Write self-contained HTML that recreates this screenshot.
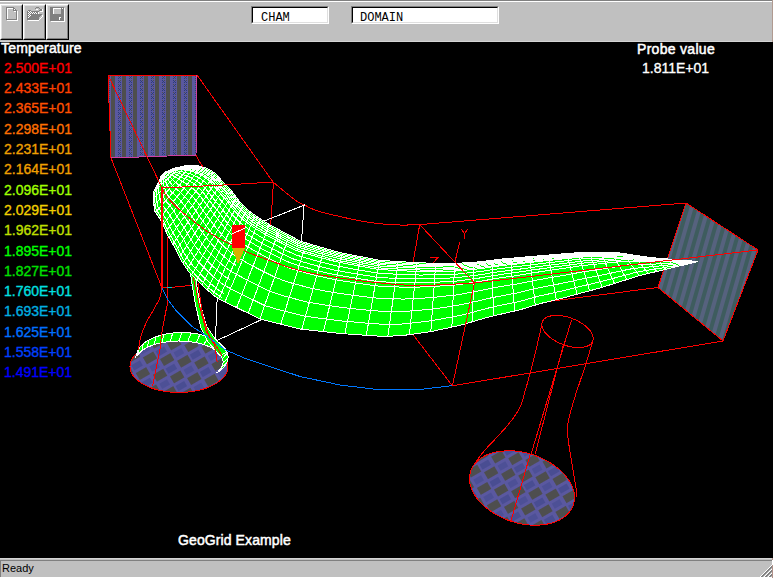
<!DOCTYPE html>
<html><head><meta charset="utf-8">
<style>
*{margin:0;padding:0;box-sizing:border-box}
html,body{width:773px;height:578px;overflow:hidden;background:#c0c0c0;position:relative;font-family:"Liberation Sans",sans-serif}
.abs{position:absolute}
#tb0{left:0;top:0;width:773px;height:1px;background:#808080}
#tb1{left:0;top:1px;width:773px;height:1px;background:#fff}
.btn{position:absolute;top:4px;width:23px;height:36px;background:#c0c0c0;border-top:1px solid #fff;border-left:1px solid #fff;border-right:1px solid #000;border-bottom:1px solid #000}
.btn i{position:absolute;left:0;top:0;right:0;bottom:0;border-top:1px solid #dfdfdf;border-left:1px solid #dfdfdf;border-right:1px solid #808080;border-bottom:1px solid #808080}
.edit{position:absolute;top:6px;height:18px;background:#fff;border-top:1px solid #808080;border-left:1px solid #808080;border-right:1px solid #fff;border-bottom:1px solid #fff}
.edit i{position:absolute;left:0;top:0;right:0;bottom:0;border-top:1px solid #000;border-left:1px solid #000;border-right:1px solid #dfdfdf;border-bottom:1px solid #dfdfdf}
.edit span{position:absolute;top:5px;font-family:"Liberation Mono",monospace;font-size:12px;line-height:12px;color:#000}
#canvas{left:0;top:42px;width:773px;height:516px;background:#000}
#status{left:0;top:558px;width:773px;height:20px;background:#c0c0c0}
.lg{position:absolute;left:4px;font-size:14px;line-height:14px;white-space:nowrap;-webkit-text-stroke:0.35px currentColor}
.wt{position:absolute;color:#fff;font-size:14px;line-height:14px;white-space:nowrap;-webkit-text-stroke:0.5px #fff;letter-spacing:0.3px}
svg{position:absolute;left:0;top:0}
#scene{position:absolute;left:0;top:0;width:773px;height:578px}
</style></head><body>
<div id="tb0" class="abs"></div>
<div id="tb1" class="abs"></div>
<div class="abs" style="left:0;top:41px;width:772px;height:1px;background:#d4d4d4"></div>
<div class="btn" style="left:0"><i></i></div>
<div class="btn" style="left:23px"><i></i></div>
<div class="btn" style="left:46px"><i></i></div>
<svg width="773" height="42" viewBox="0 0 773 42" shape-rendering="crispEdges" style="position:absolute;left:0;top:0">
<g fill="#808080">
<rect x="6" y="7" width="8" height="1"/><rect x="6" y="7" width="1" height="13"/><rect x="6" y="19" width="11" height="1"/><rect x="16" y="10" width="1" height="10"/>
<rect x="13" y="8" width="1" height="3"/><rect x="14" y="8" width="1" height="1"/><rect x="15" y="9" width="1" height="1"/><rect x="13" y="10" width="3" height="1"/>
</g>
<g fill="#fff">
<rect x="7" y="8" width="6" height="1"/><rect x="7" y="8" width="1" height="11"/><rect x="17" y="11" width="1" height="10"/><rect x="7" y="20" width="11" height="1"/>
<rect x="14" y="9" width="1" height="1"/><rect x="14" y="11" width="2" height="1"/>
</g>
<g fill="#808080">
<rect x="28" y="10" width="3" height="1"/><rect x="27" y="11" width="12" height="9"/><rect x="30" y="14" width="12" height="1"/>
<rect x="31" y="15" width="10" height="1"/><rect x="31" y="16" width="9" height="1"/><rect x="31" y="17" width="8" height="1"/><rect x="31" y="18" width="7" height="1"/>
<rect x="35" y="8" width="1" height="1"/><rect x="36" y="7" width="3" height="1"/><rect x="39" y="8" width="1" height="1"/><rect x="40" y="9" width="2" height="2"/><rect x="39" y="10" width="1" height="1"/>
</g>
<g fill="#fff">
<rect x="28" y="11" width="1" height="1"/><rect x="30" y="11" width="1" height="1"/><rect x="29" y="12" width="1" height="1"/><rect x="31" y="12" width="1" height="1"/><rect x="33" y="12" width="1" height="1"/><rect x="35" y="12" width="1" height="1"/>
<rect x="28" y="13" width="1" height="1"/><rect x="30" y="13" width="1" height="1"/><rect x="32" y="13" width="1" height="1"/><rect x="34" y="13" width="1" height="1"/><rect x="36" y="13" width="1" height="1"/>
<rect x="29" y="14" width="1" height="1"/><rect x="28" y="15" width="1" height="1"/><rect x="30" y="15" width="1" height="1"/><rect x="29" y="16" width="1" height="1"/><rect x="28" y="17" width="1" height="1"/>
<rect x="28" y="20" width="11" height="1"/><rect x="39" y="19" width="1" height="1"/><rect x="40" y="18" width="1" height="1"/><rect x="41" y="17" width="1" height="1"/><rect x="42" y="16" width="1" height="1"/><rect x="42" y="15" width="1" height="1"/>
<rect x="36" y="9" width="2" height="1"/><rect x="42" y="9" width="1" height="3"/><rect x="40" y="11" width="2" height="1"/><rect x="38" y="12" width="1" height="2"/>
</g>
<rect x="50" y="7" width="14" height="14" fill="#808080"/>
<g fill="#fff">
<rect x="53" y="8" width="8" height="1"/><rect x="53" y="8" width="1" height="6"/><rect x="62" y="8" width="1" height="1"/>
<rect x="59" y="17" width="2" height="1"/><rect x="59" y="17" width="1" height="3"/>
<rect x="64" y="8" width="1" height="14"/><rect x="51" y="21" width="14" height="1"/>
</g>
<rect x="54" y="9" width="7" height="5" fill="#c0c0c0"/>
</svg>
<div class="edit" style="left:251px;width:78px"><i></i><span style="left:9px">CHAM</span></div>
<div class="edit" style="left:351px;width:148px"><i></i><span style="left:8px">DOMAIN</span></div>
<div id="canvas" class="abs"></div>
<div id="status" class="abs"></div>

<svg width="773" height="578" viewBox="0 0 773 578" shape-rendering="crispEdges"><defs>
<pattern id="pin" patternUnits="userSpaceOnUse" width="11" height="8" x="1" y="0">
<rect width="11" height="8" fill="#5a58a0"/>
<rect x="0" width="4" height="8" fill="#4e4e4e"/>
<rect x="7" y="0" width="1" height="1" fill="#2c3c78"/><rect x="9" y="0" width="1" height="1" fill="#4e4e4e"/>
<rect x="8" y="1" width="1" height="1" fill="#2c3c78"/>
<rect x="7" y="2" width="1" height="1" fill="#2c3c78"/><rect x="9" y="2" width="1" height="1" fill="#2c3c78"/>
<rect x="7" y="4" width="1" height="1" fill="#4e4e4e"/><rect x="9" y="4" width="1" height="1" fill="#2c3c78"/>
<rect x="8" y="5" width="1" height="1" fill="#2c3c78"/>
<rect x="7" y="6" width="1" height="1" fill="#2c3c78"/><rect x="9" y="6" width="1" height="1" fill="#4e4e4e"/>
</pattern>
<pattern id="pout" patternUnits="userSpaceOnUse" width="8" height="8" patternTransform="rotate(16)">
<rect width="8" height="8" fill="#3e5c5e"/>
<rect x="0" width="4" height="8" fill="#56627e"/>
</pattern>
<pattern id="pell" patternUnits="userSpaceOnUse" width="28" height="20" patternTransform="rotate(-30)">
<rect width="28" height="20" fill="#5a58a0"/>
<rect x="1" y="1" width="12" height="8" fill="#4e4e4e"/>
<rect x="15" y="11" width="12" height="8" fill="#4e4e4e"/>
<rect x="15" y="2" width="10" height="6" fill="#3a4486" opacity="0.55"/>
<rect x="2" y="12" width="9" height="6" fill="#3a4486" opacity="0.4"/>
</pattern>
</defs>
<polygon points="108,75 197,75 196,155 111,158" fill="url(#pin)"/>
<polyline points="111,158 108,75 197,75" fill="none" stroke="#ff0000"/>
<polyline points="197,75 196,155 111,158" fill="none" stroke="#d040a0"/>
<polygon points="686,203 758,250 723,341 658,287.5" fill="url(#pout)" stroke="#ff0000"/>
<polyline points="197.0,75.0 273.0,182.0 275.5,184.1 279.2,187.1 283.4,190.7 287.8,194.3 291.8,197.5 295.0,200.0 297.3,201.6 298.9,202.6 300.3,203.2 301.5,203.7 302.8,204.3 304.5,205.0 306.3,205.9 308.0,206.9 309.8,207.8 311.9,208.8 314.6,209.9 318.0,211.0 322.4,212.3 327.8,213.6 333.7,215.1 339.8,216.5 345.6,217.8 351.0,219.0 355.9,220.0 360.5,220.9 365.0,221.7 369.3,222.4 373.5,223.0 377.6,223.5 381.6,223.9 385.5,224.3 389.2,224.6 392.9,224.8 396.5,224.9 400.0,225.0 403.7,225.0 407.5,225.0 411.2,224.9 414.7,224.8 417.6,224.7 419.7,224.6 686.0,203.0" fill="none" stroke="#ff0000"/>
<polyline points="108.0,75.0 162.0,188.0" fill="none" stroke="#ff0000"/>
<polyline points="196.0,155.0 199.0,161.0 203.0,167.0" fill="none" stroke="#ff0000"/>
<polyline points="111.0,158.0 162.0,288.0" fill="none" stroke="#ff0000"/>
<polyline points="273.5,182.0 270.5,228.0" fill="none" stroke="#ff0000"/>
<polyline points="419.7,224.6 413.0,263.0" fill="none" stroke="#ff0000"/>
<polyline points="419.7,224.6 474.5,283.0" fill="none" stroke="#ff0000"/>
<polyline points="452.4,385.8 412.8,334.3" fill="none" stroke="#ff0000"/>
<polyline points="544.0,302.0 658.0,287.5" fill="none" stroke="#ff0000"/>
<polyline points="452.4,385.8 723.0,341.0" fill="none" stroke="#ff0000"/>
<polyline points="459.7,242.4 454.8,262.4" fill="none" stroke="#ff0000"/>
<polyline points="162.0,288.0 161.8,289.0 161.6,290.5 161.3,292.1 160.9,294.0 160.4,295.9 159.8,297.7 159.1,299.5 158.2,301.3 157.2,303.1 156.2,305.0 155.1,307.0 154.0,309.0 152.8,311.1 151.6,313.2 150.3,315.3 149.0,317.5 147.7,319.8 146.6,322.0 145.5,324.3 144.5,326.6 143.5,328.9 142.6,331.3 141.7,333.7 141.0,336.0 140.4,338.5 139.8,341.2 139.3,343.9 138.9,346.4 138.6,348.5 138.3,350.0" fill="none" stroke="#ff0000"/>
<polyline points="167.5,236.5 167.5,243.7 167.5,254.1 167.6,266.1 167.6,278.4 167.5,289.4 167.4,297.7 167.2,302.8 167.0,306.0 166.7,307.8 166.4,309.1 166.0,310.6 165.5,313.0 164.9,316.4 164.2,320.1 163.5,324.0 162.7,327.9 162.1,331.7 161.5,335.0 161.1,337.7 161.0,339.7 160.9,341.6 160.7,343.7 160.4,346.4 159.8,350.0 158.8,355.2 157.5,361.8 156.0,368.9 154.6,375.9 153.4,381.8 152.5,386.0" fill="none" stroke="#ff0000"/>
<polyline points="162.0,288.0 171.5,287.3 185.4,286.0 199.3,283.9" fill="none" stroke="#ff0000"/>
<g stroke="#00c8c8"><line x1="167" y1="287.5" x2="172" y2="287.5"/><line x1="190" y1="285.5" x2="193" y2="285.5"/></g>
<polyline points="263.6,221.3 304.1,205.2 301.5,241.0" fill="none" stroke="#ffffff"/>
<polyline points="217.2,298.0 215.4,341.3 265.0,318.0" fill="none" stroke="#ffffff"/>
<polyline points="592.7,341.2 592.2,342.3 591.5,343.3 590.6,344.2 589.5,345.0 588.3,345.7 586.9,346.3 585.3,346.8 583.6,347.2 581.8,347.5 579.9,347.6 577.9,347.6 575.8,347.5 573.7,347.3 571.5,346.9 569.2,346.4 567.0,345.9 564.8,345.2 562.6,344.4 560.4,343.5 558.3,342.5 556.2,341.4 554.2,340.3 552.4,339.1 550.6,337.8 549.0,336.5 547.5,335.1 546.2,333.8 545.0,332.4 544.0,331.0 543.2,329.6 542.6,328.2 542.1,326.8 541.9,325.5 541.8,324.2 542.0,323.0 542.3,321.8 542.8,320.7 543.5,319.7 544.4,318.8 545.5,318.0 546.7,317.3 548.1,316.7 549.7,316.2 551.4,315.8 553.2,315.5 555.1,315.4 557.1,315.4 559.2,315.5 561.3,315.7 563.5,316.1 565.8,316.6 568.0,317.1 570.2,317.8 572.4,318.6 574.6,319.5 576.7,320.5 578.8,321.6 580.8,322.7 582.6,323.9 584.4,325.2 586.0,326.5 587.5,327.9 588.8,329.2 590.0,330.6 591.0,332.0 591.8,333.4 592.4,334.8 592.9,336.2 593.1,337.5 593.2,338.8 593.0,340.0" fill="none" stroke="#ff0000"/>
<polyline points="541.6,325.6 540.8,329.3 539.6,334.4 538.2,340.5 536.7,347.0 535.2,353.3 533.8,359.0 532.5,364.2 531.1,369.4 529.8,374.4 528.5,379.2 527.2,383.8 526.0,388.0 524.9,391.8 524.0,395.3 523.1,398.4 522.2,401.4 521.2,404.2 520.0,407.0 518.7,409.6 517.3,412.1 515.8,414.4 514.3,416.6 512.7,418.8 511.0,421.0 509.3,423.2 507.7,425.3 505.9,427.3 504.1,429.4 502.1,431.6 500.0,434.0 497.6,436.6 494.8,439.5 491.9,442.5 489.1,445.5 486.5,448.3 484.2,450.9 482.3,453.2 480.6,455.3 479.2,457.2 477.9,459.1 476.8,461.0 475.7,463.0 474.8,465.3 474.0,467.7 473.3,470.3 472.8,472.6 472.3,474.6 472.0,476.0" fill="none" stroke="#ff0000"/>
<polyline points="593.5,338.6 592.7,341.4 591.6,345.1 590.2,349.6 588.8,354.5 587.2,359.6 585.7,364.5 584.1,369.5 582.3,374.8 580.4,380.3 578.6,385.7 576.8,390.9 575.3,395.7 573.9,400.2 572.7,404.4 571.5,408.5 570.4,412.3 569.5,415.8 568.8,419.0 568.2,421.7 567.8,423.8 567.6,425.6 567.4,427.4 567.4,429.5 567.5,432.0 567.7,434.9 568.0,437.9 568.4,441.2 568.9,444.8 569.5,448.8 570.2,453.3 571.1,458.8 572.2,465.4 573.4,472.3 574.6,479.1 575.6,485.0 576.3,489.6 576.6,492.6 576.7,494.5 576.5,495.6 576.3,496.2 576.1,496.5 576.0,497.0" fill="none" stroke="#ff0000"/>
<polyline points="571.4,320.4 510.9,521.0" fill="none" stroke="#ff0000"/>
<polyline points="563.6,343.8 535.0,454.5" fill="none" stroke="#ff0000"/>
<polygon points="573.4,504.7 572.2,507.5 570.7,510.2 568.8,512.7 566.6,515.1 564.0,517.2 561.1,519.1 557.9,520.8 554.4,522.2 550.7,523.3 546.7,524.2 542.6,524.8 538.3,525.2 533.9,525.2 529.4,525.0 524.8,524.5 520.3,523.7 515.7,522.6 511.2,521.3 506.7,519.7 502.4,517.9 498.3,515.8 494.3,513.6 490.5,511.1 487.0,508.5 483.7,505.7 480.7,502.8 478.0,499.7 475.7,496.6 473.7,493.4 472.1,490.2 470.9,486.9 470.0,483.7 469.6,480.5 469.5,477.3 469.9,474.3 470.6,471.3 471.8,468.5 473.3,465.8 475.2,463.3 477.4,460.9 480.0,458.8 482.9,456.9 486.1,455.2 489.6,453.8 493.3,452.7 497.3,451.8 501.4,451.2 505.7,450.8 510.1,450.8 514.6,451.0 519.2,451.5 523.7,452.3 528.3,453.4 532.8,454.7 537.3,456.3 541.6,458.1 545.7,460.2 549.7,462.4 553.5,464.9 557.0,467.5 560.3,470.3 563.3,473.2 566.0,476.3 568.3,479.4 570.3,482.6 571.9,485.8 573.1,489.1 574.0,492.3 574.4,495.5 574.5,498.7 574.1,501.7" fill="url(#pell)" stroke="#ff0000"/>
<polyline points="530.2,454.5 510.9,521.0" fill="none" stroke="#ff0000"/>
<polygon points="228.0,366.5 227.8,368.8 227.3,371.0 226.3,373.2 225.0,375.4 223.4,377.5 221.4,379.5 219.1,381.4 216.5,383.2 213.6,384.9 210.5,386.4 207.1,387.8 203.5,389.0 199.7,390.1 195.8,390.9 191.7,391.6 187.5,392.1 183.3,392.4 179.0,392.5 174.7,392.4 170.5,392.1 166.3,391.6 162.2,390.9 158.3,390.1 154.5,389.0 150.9,387.8 147.5,386.4 144.4,384.9 141.5,383.2 138.9,381.4 136.6,379.5 134.6,377.5 133.0,375.4 131.7,373.2 130.7,371.0 130.2,368.8 130.0,366.5 130.2,364.2 130.7,362.0 131.7,359.8 133.0,357.6 134.6,355.5 136.6,353.5 138.9,351.6 141.5,349.8 144.4,348.1 147.5,346.6 150.9,345.2 154.5,344.0 158.3,342.9 162.2,342.1 166.3,341.4 170.5,340.9 174.7,340.6 179.0,340.5 183.3,340.6 187.5,340.9 191.7,341.4 195.8,342.1 199.7,342.9 203.5,344.0 207.1,345.2 210.5,346.6 213.6,348.1 216.5,349.8 219.1,351.6 221.4,353.5 223.4,355.5 225.0,357.6 226.3,359.8 227.3,362.0 227.8,364.2" fill="url(#pell)" stroke="#ff0000"/>
<polygon points="137.8,350.2 139.0,348.3 140.6,346.3 142.4,344.5 144.6,342.7 147.0,341.1 149.7,339.6 152.6,338.1 155.7,336.9 159.1,335.8 162.6,334.8 166.2,334.0 169.9,333.4 173.8,332.9 177.7,332.6 181.6,332.5 185.5,332.6 189.4,332.8 193.3,333.2 197.1,333.8 200.7,334.6 204.2,335.6 207.6,336.6 210.8,337.9 213.7,339.3 216.5,340.8 218.9,342.4 221.1,344.1 223.1,346.0 224.7,347.9 226.0,349.8 227.0,351.9 227.6,353.9 228.0,356.0 228.0,358.1 227.6,360.2 226.9,362.3 225.9,364.3 224.6,366.3 222.9,368.2 221.0,370.0 216.3,373.1 218.2,371.6 219.7,369.9 221.0,368.2 222.0,366.5 222.6,364.7 223.0,363.0 223.0,361.2 222.7,359.4 222.0,357.6 221.1,355.9 219.8,354.2 218.3,352.5 216.4,351.0 214.3,349.5 212.0,348.1 209.3,346.8 206.5,345.6 203.5,344.5 200.3,343.6 196.9,342.8 193.4,342.2 189.8,341.6 186.1,341.3 182.4,341.1 178.6,341.0 174.9,341.1 171.1,341.3 167.5,341.7 163.9,342.3 160.4,343.0 157.1,343.8 153.9,344.8 150.9,345.8 148.1,347.0 145.5,348.4 143.2,349.8 141.2,351.3 139.4,352.9 137.9,354.5 136.7,356.2" fill="#00ff00" stroke="#ffffff"/>
<g stroke="#fff"><line x1="136.6" y1="353.0" x2="135.6" y2="358.5"/><line x1="139.1" y1="348.2" x2="137.9" y2="354.5"/><line x1="143.2" y1="343.8" x2="141.9" y2="350.7"/><line x1="148.9" y1="340.0" x2="147.3" y2="347.4"/><line x1="155.9" y1="336.8" x2="154.1" y2="344.7"/><line x1="164.0" y1="334.4" x2="161.8" y2="342.7"/><line x1="172.8" y1="333.0" x2="170.2" y2="341.4"/><line x1="182.0" y1="332.5" x2="179.0" y2="341.0"/><line x1="191.2" y1="333.0" x2="187.8" y2="341.4"/><line x1="200.0" y1="334.4" x2="196.2" y2="342.7"/><line x1="208.1" y1="336.8" x2="203.9" y2="344.7"/><line x1="215.1" y1="340.0" x2="210.7" y2="347.4"/><line x1="220.8" y1="343.8" x2="216.1" y2="350.7"/><line x1="224.9" y1="348.2" x2="220.1" y2="354.5"/><line x1="227.4" y1="353.0" x2="222.4" y2="358.5"/><line x1="228.0" y1="357.9" x2="223.0" y2="362.7"/><line x1="226.7" y1="362.7" x2="221.8" y2="366.9"/><line x1="223.7" y1="367.4" x2="218.9" y2="370.9"/></g>
<polyline points="165.5,313.0 165.0,315.5 164.4,319.0 163.6,323.1 162.8,327.4 162.1,331.5 161.5,335.0 161.1,337.7 161.0,339.7 160.9,341.6 160.7,343.7 160.4,346.4 159.8,350.0 158.8,355.2 157.5,361.8 156.0,368.9 154.6,375.9 153.4,381.8 152.5,386.0" fill="none" stroke="#ff0000"/>
<polyline points="154.0,309.0 153.2,310.4 152.0,312.3 150.6,314.6 149.2,317.1 147.8,319.6 146.6,322.0 145.5,324.3 144.5,326.6 143.5,328.9 142.6,331.3 141.7,333.7 141.0,336.0 140.4,338.5 139.8,341.2 139.3,343.9 138.9,346.4 138.6,348.5 138.3,350.0" fill="none" stroke="#ff0000"/>
<polygon points="190.5,274.0 193.0,290.0 195.6,305.0 200.8,327.7 207.7,341.6 219.8,355.4 227.0,352.0 214.5,338.0 206.5,326.0 200.5,305.0 197.5,290.0 195.5,276.0" fill="#00ff00" stroke="#ffffff"/>
<polyline points="193.0,275.8 198.0,300.0 206.0,331.0 214.6,345.0 217.2,362.0" fill="none" stroke="#ff0000"/>
<polyline points="198.2,284.5 202.5,314.0 208.5,334.7 214.6,343.3 222.0,356.0" fill="none" stroke="#ff0000"/>
<polyline points="162.0,288.0 167.4,299.0 175.7,310.0 192.3,326.8 199.3,331.0 213.0,340.6 225.6,350.0 245.7,358.6 300.0,376.5 340.0,385.0 381.8,390.0 420.0,389.5 453.0,385.5" fill="none" stroke="#0078ff"/>
<polygon points="165.5,172.0 173.0,168.5 184.0,166.0 197.0,165.5 207.5,168.5 215.0,173.0 223.0,182.0 231.0,190.0 240.0,202.0 249.0,211.0 259.0,218.0 270.0,225.0 300.0,241.0 320.0,247.0 340.0,252.6 380.0,260.4 420.0,262.9 455.0,263.5 480.0,261.8 500.0,259.2 550.0,254.9 580.0,252.5 620.0,253.0 650.0,257.5 680.0,260.0 698.0,261.5 640.0,275.5 600.0,288.0 560.0,298.8 540.0,303.6 520.0,309.8 490.0,316.6 460.0,325.4 430.0,331.8 400.0,335.9 380.0,336.2 340.0,333.5 300.0,329.0 260.0,319.0 220.0,299.5 215.0,296.5 204.0,287.0 197.0,280.0 188.2,271.0 181.3,260.7 174.4,246.8 167.5,234.8 161.4,221.0 154.5,210.6 153.6,201.0 154.0,191.0 158.0,183.0 161.0,176.5" fill="#00ff00"/>
<g fill="none" stroke="#fff" stroke-width="1"><polyline points="165.5,172.0 168.8,170.5 172.1,169.0 175.6,168.1 179.2,167.4 182.8,166.6 186.4,166.5 190.1,166.4 193.8,166.3 197.5,166.7 201.1,167.8 204.7,168.9 208.1,170.3 211.4,172.3 214.5,174.4 217.0,177.2 219.5,180.1 222.0,182.9 224.6,185.6 227.3,188.3 229.9,191.0 232.2,194.0 234.5,197.0 236.8,200.0 239.1,203.1 241.7,205.8 244.4,208.4 247.1,211.1 250.0,213.5 253.1,215.7 256.2,217.9 259.3,220.0 262.5,222.0 265.7,224.0 268.8,226.0 272.1,227.8 275.5,229.6 278.8,231.4 282.1,233.2 285.5,234.9 288.8,236.7 292.1,238.5 295.4,240.2 298.8,242.0 302.3,243.2 305.9,244.3 309.6,245.4 313.2,246.5 316.8,247.5 320.4,248.6 324.0,249.6 327.7,250.6 331.3,251.6 334.9,252.6 338.6,253.6 342.2,254.4 345.9,255.2 349.6,255.9 353.3,256.6 357.0,257.3 360.7,258.0 364.4,258.7 368.1,259.4 371.8,260.1 375.5,260.9 379.2,261.6 383.0,261.9 386.8,262.1 390.5,262.3 394.3,262.6 398.1,262.8 401.8,263.0 405.6,263.3 409.3,263.5 413.1,263.7 416.9,263.9 420.6,264.1 424.4,264.2 428.2,264.2 431.9,264.3 435.7,264.3 439.5,264.4 443.2,264.4 447.0,264.5 450.8,264.5 454.5,264.6 458.3,264.3 462.1,264.1 465.8,263.8 469.6,263.5 473.3,263.3 477.1,263.0 480.8,262.7 484.6,262.2 488.3,261.7 492.1,261.2 495.8,260.7 499.5,260.2 503.3,259.8 507.0,259.5 510.8,259.2 514.5,258.8 518.3,258.5 522.1,258.2 525.8,257.8 529.6,257.5 533.3,257.2 537.1,256.8 540.8,256.5 544.6,256.1 548.3,255.8 552.1,255.5 555.8,255.2 559.6,254.9 563.4,254.5 567.1,254.2 570.9,253.9 574.6,253.6 578.4,253.3 582.1,253.2 585.9,253.2 589.7,253.2 593.4,253.2 597.2,253.3 601.0,253.3 604.7,253.3 608.5,253.3 612.3,253.4 616.0,253.4 619.8,253.4 623.5,253.9 627.2,254.4 630.9,254.9 634.6,255.5 638.4,256.0 642.1,256.5 645.8,257.1 649.5,257.6 653.2,258.0 656.9,258.3 660.7,258.6 664.4,258.8 668.1,259.1 671.9,259.4 675.6,259.7 679.3,260.0 683.1,260.3 686.8,260.6 690.5,260.9 694.3,261.2 698.0,261.5"/><polyline points="165.5,172.0 168.7,170.6 171.9,169.2 175.3,168.4 178.7,167.8 182.2,167.2 185.8,167.1 189.5,167.1 193.1,167.1 196.8,167.5 200.4,168.7 204.0,169.9 207.3,171.4 210.5,173.4 213.7,175.5 216.2,178.4 218.7,181.3 221.1,184.2 223.8,186.9 226.4,189.6 229.1,192.3 231.4,195.4 233.7,198.4 236.0,201.4 238.3,204.5 241.0,207.2 243.7,209.9 246.4,212.6 249.3,215.0 252.4,217.2 255.5,219.4 258.7,221.5 261.9,223.5 265.1,225.5 268.3,227.5 271.6,229.3 274.9,231.1 278.2,232.9 281.6,234.7 284.9,236.4 288.3,238.2 291.6,240.0 295.0,241.7 298.3,243.4 301.9,244.7 305.5,245.8 309.1,246.8 312.7,247.9 316.3,249.0 320.0,250.1 323.6,251.1 327.3,252.1 330.9,253.1 334.6,254.1 338.2,255.0 341.9,255.8 345.6,256.6 349.3,257.3 353.0,258.0 356.7,258.7 360.4,259.4 364.2,260.1 367.9,260.8 371.6,261.5 375.3,262.2 379.0,262.9 382.8,263.2 386.5,263.5 390.3,263.7 394.1,263.9 397.9,264.1 401.6,264.4 405.4,264.6 409.2,264.8 413.0,265.0 416.7,265.2 420.5,265.4 424.3,265.4 428.1,265.5 431.8,265.5 435.6,265.6 439.4,265.6 443.2,265.6 446.9,265.7 450.7,265.7 454.5,265.7 458.3,265.5 462.0,265.2 465.8,264.9 469.6,264.6 473.3,264.3 477.1,264.0 480.9,263.7 484.6,263.2 488.3,262.7 492.1,262.2 495.8,261.7 499.6,261.2 503.3,260.8 507.1,260.5 510.9,260.1 514.6,259.8 518.4,259.4 522.1,259.1 525.9,258.7 529.7,258.4 533.4,258.0 537.2,257.7 540.9,257.3 544.7,257.0 548.5,256.6 552.2,256.3 556.0,256.0 559.8,255.6 563.5,255.3 567.3,255.0 571.1,254.6 574.8,254.3 578.6,254.0 582.3,253.8 586.1,253.8 589.9,253.8 593.7,253.8 597.4,253.8 601.2,253.8 605.0,253.8 608.8,253.8 612.5,253.8 616.3,253.8 620.1,253.8 623.8,254.3 627.5,254.8 631.2,255.3 634.9,255.8 638.6,256.3 642.3,256.8 646.0,257.3 649.7,257.9 653.4,258.2 657.1,258.5 660.8,258.7 664.5,259.0 668.2,259.3 672.0,259.6 675.7,259.8 679.4,260.1 683.1,260.4 686.8,260.7 690.6,260.9 694.3,261.2 698.0,261.5"/><polyline points="165.5,172.0 168.5,170.7 171.6,169.4 174.9,168.8 178.2,168.2 181.6,167.7 185.2,167.7 188.7,167.9 192.3,168.0 196.0,168.5 199.5,169.7 203.1,171.0 206.5,172.6 209.6,174.7 212.7,176.8 215.2,179.7 217.7,182.6 220.2,185.5 222.8,188.3 225.5,191.1 228.2,193.8 230.5,196.9 232.8,200.0 235.1,203.0 237.5,206.0 240.1,208.8 242.9,211.5 245.6,214.2 248.5,216.7 251.7,218.9 254.8,221.0 258.0,223.1 261.2,225.2 264.4,227.2 267.6,229.2 270.9,231.0 274.3,232.8 277.6,234.6 281.0,236.3 284.3,238.1 287.7,239.9 291.0,241.6 294.4,243.3 297.8,245.1 301.3,246.3 305.0,247.4 308.6,248.5 312.2,249.5 315.9,250.6 319.5,251.7 323.2,252.7 326.8,253.7 330.5,254.7 334.1,255.6 337.8,256.6 341.5,257.4 345.2,258.1 349.0,258.8 352.7,259.5 356.4,260.2 360.1,260.9 363.8,261.6 367.6,262.3 371.3,263.0 375.0,263.7 378.7,264.4 382.5,264.7 386.3,265.0 390.1,265.2 393.9,265.4 397.7,265.6 401.4,265.9 405.2,266.1 409.0,266.3 412.8,266.5 416.6,266.7 420.4,266.8 424.1,266.9 427.9,266.9 431.7,266.9 435.5,266.9 439.3,266.9 443.1,267.0 446.9,267.0 450.7,267.0 454.4,267.0 458.2,266.7 462.0,266.4 465.8,266.1 469.5,265.8 473.3,265.5 477.1,265.2 480.9,264.9 484.6,264.3 488.4,263.8 492.1,263.3 495.9,262.8 499.6,262.3 503.4,261.9 507.2,261.5 510.9,261.2 514.7,260.8 518.5,260.5 522.2,260.1 526.0,259.7 529.8,259.3 533.6,259.0 537.3,258.6 541.1,258.2 544.9,257.9 548.6,257.5 552.4,257.2 556.2,256.8 560.0,256.5 563.7,256.1 567.5,255.8 571.3,255.4 575.0,255.1 578.8,254.7 582.6,254.6 586.4,254.5 590.2,254.5 593.9,254.5 597.7,254.5 601.5,254.4 605.3,254.4 609.1,254.4 612.8,254.4 616.6,254.3 620.4,254.3 624.1,254.7 627.8,255.2 631.5,255.7 635.2,256.2 638.8,256.7 642.5,257.2 646.2,257.6 649.9,258.1 653.6,258.4 657.3,258.7 661.0,258.9 664.7,259.2 668.4,259.5 672.1,259.7 675.8,260.0 679.5,260.2 683.2,260.5 686.9,260.7 690.6,261.0 694.3,261.2 698.0,261.5"/><polyline points="165.5,172.0 168.4,170.8 171.3,169.7 174.5,169.1 177.7,168.7 181.1,168.3 184.5,168.4 188.0,168.7 191.5,168.9 195.1,169.5 198.7,170.8 202.2,172.1 205.6,173.7 208.7,175.9 211.8,178.1 214.3,181.0 216.8,184.0 219.3,186.9 221.9,189.7 224.5,192.6 227.2,195.3 229.6,198.4 231.9,201.5 234.2,204.6 236.6,207.6 239.3,210.4 242.0,213.1 244.8,215.8 247.8,218.3 250.9,220.5 254.1,222.7 257.3,224.8 260.5,226.8 263.7,228.8 266.9,230.8 270.3,232.7 273.6,234.4 277.0,236.2 280.4,238.0 283.7,239.8 287.1,241.6 290.5,243.3 293.8,245.0 297.2,246.7 300.8,247.9 304.5,249.0 308.1,250.1 311.8,251.2 315.4,252.2 319.0,253.3 322.7,254.3 326.4,255.3 330.1,256.3 333.7,257.2 337.4,258.2 341.1,259.0 344.9,259.7 348.6,260.4 352.3,261.1 356.1,261.8 359.8,262.5 363.5,263.2 367.3,263.9 371.0,264.5 374.7,265.2 378.5,265.9 382.3,266.2 386.1,266.5 389.9,266.7 393.7,266.9 397.5,267.1 401.2,267.3 405.0,267.6 408.8,267.8 412.6,267.9 416.4,268.1 420.2,268.2 424.0,268.3 427.8,268.3 431.6,268.3 435.4,268.3 439.2,268.3 443.0,268.3 446.8,268.3 450.6,268.3 454.4,268.3 458.2,268.0 462.0,267.7 465.7,267.4 469.5,267.0 473.3,266.7 477.1,266.4 480.9,266.0 484.6,265.5 488.4,264.9 492.1,264.4 495.9,263.9 499.7,263.4 503.5,263.0 507.2,262.6 511.0,262.2 514.8,261.9 518.6,261.5 522.4,261.1 526.1,260.7 529.9,260.3 533.7,259.9 537.5,259.5 541.2,259.2 545.0,258.8 548.8,258.4 552.6,258.0 556.4,257.7 560.1,257.3 563.9,257.0 567.7,256.6 571.5,256.2 575.3,255.9 579.0,255.5 582.8,255.3 586.6,255.3 590.4,255.2 594.2,255.2 598.0,255.1 601.8,255.1 605.6,255.0 609.3,255.0 613.1,254.9 616.9,254.8 620.7,254.8 624.5,255.2 628.1,255.6 631.8,256.1 635.4,256.5 639.1,257.0 642.8,257.5 646.4,257.9 650.1,258.4 653.8,258.7 657.4,258.9 661.1,259.1 664.8,259.4 668.5,259.6 672.2,259.9 675.9,260.1 679.6,260.3 683.3,260.6 686.9,260.8 690.6,261.0 694.3,261.3 698.0,261.5"/><polyline points="165.5,172.0 168.2,170.9 171.0,170.0 174.0,169.5 177.1,169.2 180.3,169.0 183.7,169.3 187.1,169.6 190.5,170.0 194.1,170.7 197.6,172.1 201.2,173.4 204.5,175.2 207.6,177.4 210.6,179.7 213.1,182.7 215.7,185.7 218.1,188.7 220.7,191.5 223.4,194.4 226.0,197.2 228.4,200.3 230.8,203.4 233.1,206.5 235.5,209.6 238.3,212.4 241.0,215.1 243.8,217.9 246.8,220.4 250.0,222.6 253.2,224.8 256.4,226.9 259.6,228.9 262.9,230.9 266.1,232.9 269.5,234.7 272.8,236.5 276.2,238.3 279.6,240.1 283.0,241.9 286.3,243.7 289.7,245.4 293.2,247.0 296.6,248.7 300.2,250.0 303.8,251.0 307.5,252.1 311.1,253.2 314.8,254.3 318.5,255.3 322.2,256.3 325.8,257.3 329.5,258.3 333.2,259.2 336.9,260.2 340.6,261.0 344.4,261.6 348.1,262.3 351.9,263.0 355.6,263.7 359.4,264.4 363.1,265.1 366.9,265.8 370.7,266.4 374.4,267.1 378.2,267.8 382.0,268.1 385.8,268.3 389.6,268.6 393.4,268.8 397.2,269.0 401.0,269.2 404.8,269.4 408.6,269.6 412.4,269.7 416.2,269.9 420.0,270.0 423.9,270.0 427.7,270.0 431.5,270.0 435.3,270.0 439.1,270.0 442.9,270.0 446.7,269.9 450.5,269.9 454.3,269.9 458.1,269.6 461.9,269.2 465.7,268.9 469.5,268.5 473.3,268.2 477.1,267.8 480.9,267.4 484.6,266.9 488.4,266.3 492.2,265.8 496.0,265.3 499.7,264.7 503.5,264.3 507.3,263.9 511.1,263.6 514.9,263.2 518.7,262.8 522.5,262.3 526.3,261.9 530.0,261.5 533.8,261.1 537.6,260.7 541.4,260.3 545.2,259.9 549.0,259.5 552.8,259.1 556.6,258.8 560.4,258.4 564.2,258.0 568.0,257.6 571.7,257.2 575.5,256.8 579.3,256.5 583.1,256.2 586.9,256.2 590.7,256.1 594.5,256.0 598.3,255.9 602.1,255.8 605.9,255.7 609.7,255.7 613.5,255.6 617.3,255.5 621.1,255.4 624.9,255.7 628.5,256.1 632.1,256.6 635.8,257.0 639.4,257.4 643.1,257.9 646.7,258.3 650.3,258.7 654.0,259.0 657.7,259.2 661.3,259.4 665.0,259.6 668.7,259.8 672.3,260.0 676.0,260.2 679.7,260.4 683.3,260.7 687.0,260.9 690.7,261.1 694.3,261.3 698.0,261.5"/><polyline points="165.5,172.0 168.1,171.0 170.8,170.2 173.7,169.9 176.6,169.7 179.7,169.6 183.0,169.9 186.3,170.4 189.7,170.9 193.3,171.7 196.8,173.1 200.3,174.6 203.6,176.4 206.7,178.6 209.7,181.0 212.2,184.0 214.7,187.0 217.2,190.0 219.8,192.9 222.4,195.8 225.1,198.7 227.5,201.8 229.9,205.0 232.3,208.1 234.7,211.2 237.4,214.0 240.2,216.7 243.0,219.5 246.0,222.0 249.2,224.3 252.5,226.5 255.7,228.6 259.0,230.6 262.2,232.6 265.5,234.6 268.8,236.4 272.2,238.2 275.6,240.0 279.0,241.8 282.4,243.5 285.8,245.3 289.2,247.0 292.6,248.7 296.0,250.4 299.6,251.6 303.3,252.7 307.0,253.7 310.7,254.8 314.3,255.9 318.0,257.0 321.7,258.0 325.4,258.9 329.1,259.9 332.8,260.8 336.5,261.8 340.2,262.5 344.0,263.2 347.8,263.9 351.5,264.6 355.3,265.3 359.1,266.0 362.8,266.6 366.6,267.3 370.4,268.0 374.1,268.6 377.9,269.3 381.7,269.6 385.5,269.8 389.3,270.1 393.2,270.3 397.0,270.5 400.8,270.7 404.6,270.9 408.4,271.1 412.3,271.2 416.1,271.3 419.9,271.4 423.7,271.4 427.5,271.4 431.4,271.4 435.2,271.4 439.0,271.3 442.8,271.3 446.6,271.2 450.4,271.2 454.3,271.1 458.1,270.8 461.9,270.5 465.7,270.1 469.5,269.8 473.3,269.4 477.1,269.0 480.9,268.6 484.6,268.0 488.4,267.4 492.2,266.9 496.0,266.4 499.8,265.8 503.6,265.4 507.4,265.0 511.2,264.6 515.0,264.2 518.8,263.8 522.6,263.3 526.4,262.9 530.2,262.5 534.0,262.0 537.8,261.6 541.6,261.2 545.4,260.8 549.2,260.4 553.0,260.0 556.8,259.6 560.6,259.2 564.4,258.8 568.2,258.4 572.0,258.0 575.8,257.6 579.6,257.2 583.4,257.0 587.2,256.9 591.0,256.8 594.8,256.7 598.6,256.6 602.4,256.4 606.2,256.3 610.0,256.2 613.8,256.1 617.6,256.0 621.4,255.9 625.2,256.2 628.8,256.6 632.4,257.0 636.0,257.4 639.7,257.8 643.3,258.2 646.9,258.6 650.5,259.0 654.2,259.2 657.8,259.4 661.5,259.6 665.1,259.8 668.8,260.0 672.4,260.2 676.1,260.4 679.7,260.6 683.4,260.7 687.0,260.9 690.7,261.1 694.3,261.3 698.0,261.5"/><polyline points="165.5,172.0 167.7,171.3 170.1,170.7 172.7,170.7 175.4,170.8 178.3,171.0 181.3,171.6 184.5,172.4 187.7,173.1 191.2,174.1 194.7,175.7 198.1,177.3 201.4,179.3 204.4,181.7 207.4,184.2 209.9,187.3 212.4,190.4 214.9,193.5 217.5,196.5 220.1,199.5 222.8,202.4 225.2,205.6 227.6,208.8 230.1,212.0 232.6,215.1 235.4,217.9 238.2,220.8 241.1,223.5 244.1,226.1 247.4,228.4 250.7,230.7 253.9,232.7 257.2,234.7 260.5,236.7 263.8,238.7 267.2,240.6 270.6,242.3 274.0,244.1 277.5,245.9 280.9,247.7 284.3,249.5 287.8,251.2 291.2,252.8 294.7,254.5 298.3,255.7 302.0,256.7 305.7,257.8 309.4,258.9 313.1,260.0 316.8,261.0 320.6,262.0 324.3,262.9 328.0,263.8 331.8,264.8 335.5,265.7 339.3,266.4 343.1,267.1 346.9,267.8 350.7,268.5 354.5,269.2 358.3,269.8 362.1,270.5 365.8,271.1 369.6,271.7 373.4,272.4 377.2,273.0 381.1,273.3 384.9,273.6 388.8,273.8 392.6,274.0 396.5,274.2 400.3,274.4 404.2,274.6 408.0,274.7 411.9,274.8 415.7,274.9 419.5,275.0 423.4,275.0 427.2,274.9 431.1,274.9 434.9,274.8 438.8,274.7 442.6,274.6 446.5,274.5 450.3,274.4 454.1,274.3 458.0,274.0 461.8,273.6 465.6,273.2 469.4,272.8 473.2,272.4 477.1,271.9 480.9,271.5 484.7,270.9 488.5,270.3 492.3,269.7 496.1,269.1 499.9,268.6 503.7,268.1 507.6,267.7 511.4,267.2 515.2,266.8 519.0,266.3 522.8,265.9 526.6,265.4 530.5,264.9 534.3,264.4 538.1,264.0 541.9,263.5 545.7,263.1 549.6,262.6 553.4,262.2 557.2,261.8 561.0,261.3 564.8,260.9 568.7,260.5 572.5,260.0 576.3,259.6 580.1,259.1 584.0,258.8 587.8,258.7 591.6,258.5 595.4,258.3 599.3,258.2 603.1,258.0 606.9,257.8 610.7,257.6 614.5,257.4 618.4,257.3 622.2,257.1 626.0,257.3 629.6,257.6 633.1,257.9 636.7,258.3 640.3,258.6 643.9,259.0 647.5,259.3 651.1,259.7 654.7,259.8 658.3,260.0 661.9,260.1 665.5,260.3 669.1,260.4 672.7,260.5 676.3,260.7 680.0,260.8 683.6,260.9 687.2,261.1 690.8,261.2 694.4,261.4 698.0,261.5"/><polyline points="165.5,172.0 167.3,171.6 169.4,171.4 171.7,171.7 174.0,172.1 176.6,172.5 179.5,173.5 182.5,174.5 185.5,175.6 189.0,176.8 192.4,178.5 195.8,180.4 198.9,182.5 201.9,185.1 204.8,187.7 207.4,190.9 209.9,194.1 212.3,197.3 214.9,200.4 217.5,203.5 220.2,206.6 222.6,209.8 225.1,213.1 227.7,216.2 230.2,219.4 233.1,222.3 236.0,225.2 238.9,228.0 242.0,230.6 245.3,233.0 248.7,235.3 252.0,237.3 255.4,239.3 258.7,241.3 262.0,243.3 265.4,245.1 268.9,246.9 272.3,248.7 275.8,250.5 279.2,252.3 282.7,254.1 286.2,255.7 289.7,257.3 293.2,258.9 296.9,260.1 300.6,261.2 304.4,262.3 308.1,263.4 311.8,264.4 315.6,265.5 319.3,266.5 323.1,267.3 326.9,268.2 330.6,269.1 334.4,270.0 338.2,270.8 342.1,271.4 345.9,272.1 349.7,272.8 353.5,273.4 357.4,274.1 361.2,274.7 365.0,275.3 368.9,275.9 372.7,276.5 376.5,277.2 380.4,277.5 384.3,277.7 388.1,278.0 392.0,278.1 395.9,278.3 399.8,278.5 403.7,278.6 407.5,278.8 411.4,278.8 415.3,278.9 419.2,278.9 423.0,278.8 426.9,278.8 430.8,278.7 434.7,278.6 438.5,278.4 442.4,278.3 446.3,278.1 450.1,278.0 454.0,277.8 457.8,277.4 461.7,277.0 465.5,276.6 469.4,276.1 473.2,275.6 477.1,275.1 480.9,274.6 484.7,274.0 488.5,273.3 492.4,272.7 496.2,272.1 500.0,271.6 503.9,271.1 507.7,270.6 511.6,270.1 515.5,269.7 519.3,269.2 523.1,268.6 527.0,268.1 530.8,267.6 534.6,267.0 538.5,266.5 542.3,266.1 546.2,265.6 550.0,265.1 553.9,264.6 557.7,264.1 561.5,263.7 565.4,263.2 569.2,262.7 573.1,262.2 576.9,261.7 580.8,261.2 584.6,260.9 588.5,260.7 592.3,260.4 596.1,260.2 600.0,259.9 603.8,259.7 607.7,259.4 611.5,259.2 615.4,258.9 619.2,258.7 623.0,258.4 626.9,258.5 630.4,258.8 633.9,259.0 637.5,259.3 641.0,259.6 644.6,259.8 648.1,260.1 651.7,260.4 655.2,260.5 658.8,260.6 662.3,260.7 665.9,260.8 669.5,260.8 673.0,260.9 676.6,261.0 680.2,261.1 683.7,261.2 687.3,261.3 690.9,261.3 694.4,261.4 698.0,261.5"/><polyline points="165.5,172.0 166.9,171.9 168.7,172.0 170.7,172.6 172.6,173.3 175.0,174.1 177.7,175.3 180.5,176.7 183.3,178.0 186.7,179.4 190.1,181.4 193.4,183.4 196.5,185.8 199.4,188.5 202.3,191.2 204.8,194.5 207.3,197.8 209.8,201.1 212.3,204.3 214.9,207.5 217.6,210.7 220.1,214.0 222.6,217.3 225.2,220.5 227.9,223.7 230.8,226.7 233.8,229.6 236.8,232.5 239.9,235.1 243.3,237.6 246.8,239.8 250.1,241.9 253.5,243.9 256.8,245.9 260.2,247.9 263.7,249.7 267.2,251.5 270.6,253.3 274.1,255.1 277.6,256.9 281.1,258.7 284.6,260.3 288.2,261.9 291.7,263.4 295.5,264.6 299.2,265.7 303.0,266.7 306.8,267.8 310.5,268.9 314.3,270.0 318.1,270.9 321.9,271.8 325.7,272.6 329.5,273.5 333.3,274.4 337.2,275.1 341.0,275.7 344.9,276.4 348.7,277.0 352.6,277.7 356.5,278.3 360.3,278.9 364.2,279.5 368.1,280.1 371.9,280.7 375.8,281.3 379.7,281.6 383.6,281.8 387.5,282.1 391.4,282.3 395.3,282.4 399.2,282.6 403.2,282.7 407.1,282.8 411.0,282.8 414.9,282.8 418.8,282.8 422.7,282.7 426.6,282.6 430.5,282.5 434.4,282.3 438.3,282.1 442.2,281.9 446.1,281.7 449.9,281.5 453.8,281.3 457.7,280.9 461.6,280.5 465.5,279.9 469.3,279.4 473.2,278.9 477.0,278.4 480.9,277.8 484.7,277.1 488.6,276.4 492.5,275.8 496.3,275.2 500.2,274.6 504.1,274.0 507.9,273.5 511.8,273.0 515.7,272.5 519.5,272.0 523.4,271.4 527.3,270.8 531.1,270.2 535.0,269.6 538.8,269.1 542.7,268.6 546.6,268.1 550.5,267.6 554.3,267.0 558.2,266.5 562.1,266.0 565.9,265.5 569.8,264.9 573.7,264.4 577.5,263.9 581.4,263.3 585.3,262.9 589.1,262.6 593.0,262.3 596.9,262.0 600.7,261.7 604.6,261.4 608.4,261.0 612.3,260.7 616.2,260.4 620.0,260.1 623.9,259.7 627.7,259.7 631.2,259.9 634.7,260.1 638.2,260.3 641.7,260.5 645.2,260.7 648.7,260.9 652.2,261.1 655.7,261.2 659.3,261.2 662.8,261.2 666.3,261.3 669.8,261.3 673.4,261.3 676.9,261.3 680.4,261.4 683.9,261.4 687.4,261.4 691.0,261.4 694.5,261.5 698.0,261.5"/><polyline points="165.5,172.0 166.5,172.2 167.9,172.7 169.5,173.6 171.2,174.6 173.3,175.8 175.7,177.4 178.2,179.0 180.9,180.7 184.2,182.3 187.6,184.5 190.8,186.7 193.8,189.3 196.6,192.2 199.5,195.1 202.0,198.4 204.6,201.8 207.0,205.3 209.5,208.6 212.1,211.9 214.8,215.2 217.3,218.6 219.9,221.9 222.6,225.2 225.3,228.4 228.3,231.4 231.3,234.4 234.4,237.3 237.6,240.1 241.1,242.6 244.6,244.9 248.0,246.9 251.4,248.9 254.8,250.9 258.2,252.8 261.7,254.7 265.3,256.5 268.8,258.3 272.3,260.1 275.8,261.9 279.3,263.7 282.9,265.3 286.5,266.8 290.1,268.3 293.9,269.5 297.7,270.6 301.5,271.6 305.3,272.7 309.1,273.8 312.9,274.8 316.7,275.8 320.6,276.6 324.4,277.4 328.3,278.3 332.1,279.1 336.0,279.8 339.9,280.4 343.8,281.1 347.7,281.7 351.6,282.3 355.5,282.9 359.4,283.5 363.3,284.1 367.2,284.6 371.1,285.2 375.0,285.8 378.9,286.1 382.9,286.3 386.8,286.6 390.8,286.8 394.7,286.9 398.7,287.0 402.6,287.1 406.5,287.2 410.5,287.2 414.4,287.2 418.3,287.1 422.3,286.9 426.2,286.8 430.1,286.6 434.1,286.4 438.0,286.2 441.9,285.9 445.8,285.7 449.8,285.4 453.7,285.1 457.6,284.7 461.5,284.2 465.4,283.6 469.3,283.0 473.1,282.4 477.0,281.9 480.9,281.3 484.8,280.5 488.7,279.8 492.5,279.1 496.4,278.5 500.3,277.8 504.2,277.3 508.1,276.7 512.0,276.2 516.0,275.7 519.8,275.1 523.7,274.4 527.6,273.8 531.5,273.1 535.3,272.5 539.2,271.9 543.1,271.3 547.0,270.8 550.9,270.2 554.8,269.7 558.7,269.1 562.6,268.5 566.5,267.9 570.4,267.4 574.3,266.8 578.2,266.2 582.1,265.6 586.0,265.2 589.9,264.8 593.8,264.4 597.6,264.0 601.5,263.6 605.4,263.2 609.3,262.8 613.2,262.4 617.1,262.0 620.9,261.6 624.8,261.2 628.7,261.1 632.1,261.2 635.6,261.3 639.0,261.4 642.5,261.5 646.0,261.7 649.4,261.8 652.9,261.9 656.3,261.9 659.8,261.9 663.3,261.9 666.7,261.8 670.2,261.8 673.7,261.7 677.2,261.7 680.6,261.7 684.1,261.6 687.6,261.6 691.1,261.6 694.5,261.5 698.0,261.5"/><polyline points="165.5,172.0 165.4,173.0 165.8,174.5 166.5,176.3 167.2,178.2 168.6,180.3 170.3,182.8 172.4,185.3 174.5,187.8 177.6,190.1 180.9,192.8 183.9,195.6 186.7,198.6 189.3,202.0 192.1,205.3 194.6,209.0 197.2,212.6 199.6,216.3 202.1,220.0 204.6,223.6 207.3,227.1 209.9,230.8 212.6,234.3 215.6,237.6 218.5,241.0 221.7,244.2 224.9,247.3 228.1,250.3 231.5,253.2 235.1,255.9 238.9,258.2 242.4,260.2 245.9,262.2 249.5,264.2 253.0,266.1 256.6,268.0 260.2,269.8 263.8,271.6 267.4,273.5 271.0,275.3 274.6,277.1 278.3,278.5 282.1,279.9 285.8,281.4 289.7,282.5 293.6,283.6 297.5,284.6 301.4,285.7 305.3,286.8 309.2,287.8 313.1,288.7 317.1,289.5 321.0,290.2 325.0,291.0 328.9,291.7 332.9,292.4 336.9,293.0 340.9,293.6 344.9,294.2 348.9,294.8 352.9,295.3 356.9,295.8 360.9,296.3 364.9,296.8 368.9,297.3 372.9,297.8 376.9,298.1 381.0,298.3 385.0,298.6 389.0,298.7 393.1,298.8 397.1,298.9 401.1,299.0 405.2,299.0 409.2,298.8 413.2,298.7 417.2,298.5 421.2,298.2 425.2,298.0 429.3,297.7 433.3,297.4 437.3,297.0 441.3,296.6 445.3,296.1 449.2,295.7 453.2,295.3 457.2,294.8 461.2,294.2 465.2,293.4 469.1,292.7 473.1,292.0 477.0,291.2 481.0,290.5 484.9,289.6 488.8,288.8 492.8,288.0 496.8,287.3 500.7,286.6 504.7,285.9 508.7,285.3 512.7,284.6 516.6,284.0 520.6,283.3 524.5,282.5 528.5,281.7 532.4,280.9 536.3,280.1 540.3,279.4 544.3,278.7 548.3,278.0 552.2,277.4 556.2,276.7 560.2,276.0 564.1,275.3 568.1,274.6 572.0,273.9 576.0,273.1 580.0,272.4 583.9,271.7 587.9,271.1 591.8,270.6 595.8,270.0 599.7,269.4 603.7,268.7 607.6,268.1 611.6,267.5 615.5,266.9 619.4,266.3 623.4,265.6 627.3,265.0 631.2,264.6 634.6,264.5 637.9,264.4 641.2,264.4 644.6,264.3 647.9,264.2 651.2,264.1 654.5,264.1 657.9,263.9 661.2,263.7 664.6,263.5 667.9,263.3 671.3,263.1 674.6,262.9 677.9,262.7 681.3,262.5 684.6,262.3 688.0,262.1 691.3,261.9 694.7,261.7 698.0,261.5"/><polyline points="165.5,172.0 164.2,173.9 163.6,176.4 163.3,179.2 163.0,182.0 163.6,185.1 164.7,188.5 166.1,191.9 167.7,195.3 170.6,198.4 173.7,201.6 176.6,205.0 179.1,208.6 181.6,212.4 184.2,216.2 186.8,220.1 189.3,224.1 191.7,228.1 194.1,232.1 196.6,236.1 199.3,239.8 202.0,243.7 204.9,247.4 208.1,250.9 211.3,254.3 214.6,257.7 218.0,261.0 221.5,264.1 225.1,267.2 228.8,270.0 232.9,272.4 236.5,274.4 240.1,276.3 243.8,278.3 247.4,280.2 251.1,282.1 254.8,283.9 258.5,285.8 262.2,287.6 265.9,289.5 269.6,291.3 273.5,292.6 277.4,293.9 281.3,295.2 285.3,296.3 289.3,297.4 293.3,298.4 297.3,299.5 301.3,300.6 305.2,301.6 309.3,302.5 313.4,303.1 317.4,303.8 321.5,304.5 325.6,305.1 329.7,305.7 333.7,306.3 337.8,306.8 341.9,307.4 346.0,307.9 350.1,308.4 354.2,308.8 358.3,309.2 362.4,309.7 366.6,310.1 370.7,310.5 374.8,310.8 378.9,311.1 383.0,311.4 387.2,311.4 391.3,311.5 395.4,311.5 399.6,311.6 403.7,311.5 407.8,311.2 411.9,310.9 416.0,310.6 420.1,310.2 424.2,309.8 428.3,309.5 432.4,309.0 436.5,308.5 440.6,307.9 444.6,307.3 448.7,306.7 452.8,306.1 456.9,305.5 460.9,304.7 464.9,303.8 468.9,303.0 473.0,302.1 477.0,301.2 481.0,300.2 485.0,299.3 489.0,298.3 493.0,297.5 497.1,296.7 501.2,295.9 505.2,295.1 509.3,294.4 513.3,293.6 517.4,292.9 521.4,292.0 525.4,291.0 529.4,290.0 533.4,289.1 537.4,288.1 541.4,287.3 545.5,286.5 549.5,285.7 553.6,285.0 557.6,284.2 561.7,283.3 565.7,282.5 569.7,281.6 573.8,280.8 577.8,279.9 581.8,279.1 585.9,278.2 589.9,277.4 593.9,276.7 597.9,275.9 602.0,275.0 606.0,274.2 610.0,273.3 614.0,272.5 618.0,271.6 622.0,270.8 626.0,269.9 630.0,269.1 634.0,268.4 637.1,268.1 640.3,267.8 643.5,267.5 646.7,267.2 649.9,266.9 653.1,266.6 656.3,266.3 659.5,266.0 662.7,265.6 665.9,265.2 669.1,264.9 672.4,264.5 675.6,264.1 678.8,263.7 682.0,263.4 685.2,263.0 688.4,262.6 691.6,262.2 694.8,261.9 698.0,261.5"/><polyline points="165.5,172.0 163.0,174.8 161.4,178.3 160.1,182.1 158.7,185.9 158.6,189.9 159.0,194.2 159.8,198.5 160.9,202.9 163.6,206.6 166.6,210.4 169.3,214.4 171.6,218.6 173.9,222.9 176.3,227.1 178.9,231.3 181.5,235.5 183.9,239.8 186.2,244.2 188.6,248.5 191.4,252.6 194.2,256.7 197.2,260.5 200.7,264.1 204.1,267.7 207.6,271.2 211.1,274.7 214.8,277.9 218.6,281.2 222.5,284.1 226.8,286.6 230.5,288.6 234.3,290.5 238.1,292.4 241.8,294.3 245.6,296.2 249.4,298.1 253.2,299.9 257.0,301.8 260.8,303.7 264.6,305.6 268.6,306.7 272.7,307.9 276.7,309.1 280.8,310.1 284.9,311.2 289.0,312.3 293.1,313.3 297.2,314.4 301.3,315.4 305.4,316.3 309.6,316.8 313.8,317.4 318.0,318.0 322.2,318.5 326.4,319.1 330.6,319.6 334.8,320.1 339.0,320.6 343.2,321.1 347.4,321.5 351.6,321.8 355.8,322.2 360.0,322.6 364.2,322.9 368.4,323.3 372.6,323.6 376.9,323.9 381.1,324.1 385.3,324.2 389.5,324.2 393.8,324.1 398.0,324.1 402.2,324.0 406.4,323.6 410.6,323.1 414.8,322.7 419.0,322.2 423.2,321.7 427.4,321.2 431.6,320.7 435.7,319.9 439.9,319.2 444.0,318.4 448.2,317.7 452.3,316.9 456.5,316.2 460.6,315.3 464.7,314.3 468.8,313.2 472.9,312.2 476.9,311.1 481.0,310.0 485.1,308.9 489.2,307.8 493.3,306.9 497.4,306.0 501.6,305.1 505.7,304.3 509.9,303.4 514.0,302.6 518.1,301.7 522.2,300.7 526.3,299.6 530.3,298.4 534.4,297.3 538.5,296.2 542.6,295.2 546.7,294.4 550.8,293.5 555.0,292.6 559.1,291.6 563.2,290.7 567.3,289.7 571.4,288.7 575.5,287.7 579.6,286.7 583.7,285.7 587.8,284.7 591.9,283.7 596.0,282.8 600.1,281.8 604.2,280.7 608.2,279.6 612.3,278.6 616.4,277.5 620.4,276.4 624.5,275.3 628.6,274.3 632.6,273.2 636.7,272.2 639.7,271.6 642.8,271.1 645.9,270.6 648.9,270.1 652.0,269.6 655.0,269.1 658.1,268.6 661.2,268.1 664.2,267.5 667.3,267.0 670.4,266.4 673.5,265.9 676.5,265.3 679.6,264.8 682.7,264.2 685.7,263.7 688.8,263.1 691.9,262.6 694.9,262.0 698.0,261.5"/><polyline points="165.5,172.0 165.9,172.6 166.9,173.6 168.0,175.0 169.2,176.4 170.9,178.0 173.0,180.1 175.3,182.1 177.7,184.2 180.9,186.2 184.2,188.6 187.4,191.1 190.2,194.0 193.0,197.1 195.8,200.2 198.3,203.7 200.9,207.2 203.3,210.8 205.8,214.3 208.3,217.8 211.0,221.1 213.6,224.7 216.3,228.1 219.1,231.4 221.9,234.7 225.0,237.8 228.1,240.9 231.3,243.8 234.6,246.6 238.1,249.2 241.8,251.5"/><polyline points="165.5,172.0 164.8,173.5 164.7,175.4 164.9,177.8 165.1,180.1 166.1,182.7 167.5,185.6 169.2,188.6 171.1,191.5 174.1,194.2 177.3,197.2 180.3,200.3 182.9,203.6 185.5,207.2 188.2,210.7 190.7,214.5 193.3,218.3 195.7,222.2 198.1,226.0 200.6,229.8 203.3,233.5 206.0,237.2 208.8,240.8 211.9,244.3 214.9,247.7 218.1,250.9 221.4,254.1 224.8,257.2 228.3,260.2 232.0,262.9 235.9,265.3"/><polyline points="165.5,172.0 163.6,174.4 162.5,177.4 161.7,180.7 160.9,183.9 161.1,187.5 161.8,191.4 163.0,195.2 164.3,199.1 167.1,202.5 170.2,206.0 172.9,209.7 175.4,213.6 177.7,217.6 180.3,221.6 182.8,225.7 185.4,229.8 187.8,234.0 190.2,238.1 192.6,242.3 195.3,246.2 198.1,250.2 201.1,253.9 204.4,257.5 207.7,261.0 211.1,264.4 214.5,267.8 218.1,271.0 221.8,274.2 225.7,277.1 229.8,279.5"/><polyline points="165.5,172.0 162.4,175.2 160.4,179.2 158.6,183.5 156.8,187.7 156.2,192.2 156.3,196.9 156.9,201.7 157.6,206.4 160.3,210.5 163.2,214.5 165.8,218.8 168.0,223.3 170.2,227.8 172.6,232.2 175.2,236.5 177.8,240.9 180.1,245.4 182.5,249.9 184.8,254.3 187.6,258.5 190.5,262.7 193.6,266.7 197.1,270.3 200.7,274.0 204.2,277.6 207.9,281.1 211.7,284.4 215.5,287.7 219.5,290.8 223.9,293.3"/><polyline points="165.5,172.0 162.0,175.5 159.7,179.8 157.7,184.3 155.5,188.8 154.7,193.6 154.7,198.6 155.1,203.6 155.6,208.6 158.2,212.9 161.1,217.1 163.7,221.5 165.8,226.2 167.9,230.8 170.3,235.4 172.9,239.8 175.5,244.3 177.8,248.8 180.1,253.4 182.5,258.0 185.3,262.3 188.1,266.6 191.4,270.5 194.9,274.2 198.5,277.9 202.2,281.5 205.8,285.1 209.7,288.5 213.6,291.8 217.7,295.0 222.1,297.5"/><polyline points="170.6,169.6 170.4,169.8 170.3,169.9 170.1,170.1 169.9,170.2 169.6,170.4 169.4,170.6 168.9,171.0 168.4,171.5 167.8,171.9 167.2,172.4 166.4,173.1 165.6,173.8 164.7,174.5 163.9,175.2 163.0,175.9 162.2,176.6 161.4,177.2 160.6,177.9"/><polyline points="175.6,167.9 175.3,168.2 174.9,168.5 174.6,168.8 174.2,169.2 173.7,169.6 173.4,169.9 172.5,170.7 171.5,171.6 170.5,172.5 169.4,173.5 167.9,174.8 166.4,176.1 164.9,177.5 163.3,178.9 161.8,180.3 160.2,181.7 158.8,183.0 157.3,184.3"/><polyline points="180.7,166.8 180.3,167.2 179.8,167.6 179.3,168.1 178.7,168.6 178.1,169.2 177.6,169.7 176.2,170.9 174.8,172.2 173.4,173.5 171.8,175.0 169.7,176.9 167.6,178.8 165.4,180.9 163.1,183.0 160.9,185.0 158.7,187.1 156.6,189.0 154.5,190.9"/><polyline points="185.9,166.0 185.3,166.5 184.8,167.1 184.1,167.7 183.5,168.4 182.7,169.2 182.0,169.8 180.4,171.4 178.6,173.2 176.9,175.0 174.9,176.9 172.4,179.5 169.8,182.0 167.1,184.7 164.3,187.5 161.6,190.2 158.9,192.9 156.3,195.5 153.7,198.1"/><polyline points="191.1,165.7 190.5,166.4 189.8,167.1 189.1,167.9 188.4,168.7 187.4,169.7 186.7,170.5 184.8,172.5 182.8,174.6 180.7,176.8 178.5,179.2 175.5,182.3 172.6,185.5 169.4,188.9 166.3,192.2 163.1,195.6 159.9,199.0 157.0,202.1 154.0,205.3"/><polyline points="196.4,165.7 195.7,166.5 195.0,167.3 194.1,168.3 193.3,169.2 192.3,170.4 191.5,171.3 189.5,173.6 187.2,176.2 185.0,178.7 182.6,181.5 179.3,185.2 176.0,188.9 172.6,192.9 169.1,196.8 165.7,200.8 162.2,204.7 159.0,208.4 155.7,212.2"/><polyline points="201.5,166.8 200.8,167.7 200.0,168.6 199.2,169.6 198.3,170.6 197.3,171.9 196.5,173.0 194.4,175.5 192.1,178.4 189.8,181.2 187.2,184.3 183.9,188.4 180.5,192.5 177.0,196.9 173.4,201.3 169.8,205.6 166.3,210.0 162.9,214.1 159.6,218.3"/><polyline points="206.5,168.3 205.8,169.3 205.0,170.3 204.1,171.4 203.2,172.6 202.1,174.0 201.3,175.1 199.1,177.9 196.7,181.0 194.3,184.1 191.7,187.5 188.2,192.0 184.7,196.5 181.1,201.3 177.4,206.1 173.7,210.8 170.0,215.6 166.5,220.1 163.0,224.6"/><polyline points="211.2,170.7 210.4,171.7 209.6,172.8 208.7,174.0 207.8,175.2 206.6,176.8 205.7,178.0 203.5,181.0 201.0,184.3 198.5,187.7 195.8,191.3 192.2,196.1 188.5,201.0 184.7,206.1 180.9,211.3 177.0,216.4 173.2,221.6 169.6,226.4 165.9,231.3"/><polyline points="215.5,173.6 214.7,174.7 213.9,175.8 213.0,177.1 212.0,178.4 210.9,180.0 210.0,181.3 207.6,184.5 205.1,188.0 202.6,191.6 199.8,195.4 196.1,200.5 192.4,205.7 188.4,211.1 184.5,216.6 180.5,222.0 176.6,227.5 172.9,232.6 169.2,237.7"/><polyline points="219.0,177.5 218.2,178.7 217.4,179.9 216.5,181.2 215.6,182.5 214.4,184.2 213.5,185.5 211.2,188.8 208.6,192.5 206.1,196.1 203.3,200.1 199.6,205.5 195.9,210.8 192.0,216.4 188.1,222.1 184.1,227.7 180.2,233.4 176.5,238.7 172.8,244.0"/><polyline points="222.5,181.5 221.7,182.6 220.9,183.9 220.0,185.3 219.0,186.6 217.9,188.4 217.0,189.7 214.6,193.2 212.1,197.0 209.6,200.8 206.8,204.9 203.1,210.4 199.4,215.9 195.4,221.8 191.5,227.7 187.6,233.5 183.6,239.4 179.9,244.9 176.2,250.4"/><polyline points="226.2,185.2 225.4,186.4 224.6,187.7 223.6,189.2 222.7,190.6 221.5,192.4 220.6,193.8 218.3,197.4 215.7,201.3 213.1,205.3 210.3,209.6 206.6,215.3 202.8,221.1 198.8,227.2 194.9,233.3 190.9,239.4 186.9,245.5 183.2,251.2 179.4,256.9"/><polyline points="229.9,188.9 229.1,190.2 228.3,191.5 227.4,193.0 226.4,194.5 225.2,196.4 224.3,197.8 222.0,201.6 219.4,205.6 216.8,209.7 214.0,214.2 210.2,220.1 206.5,226.1 202.5,232.4 198.5,238.7 194.5,245.0 190.5,251.3 186.8,257.3 183.0,263.2"/><polyline points="233.3,193.0 232.5,194.3 231.6,195.7 230.7,197.2 229.8,198.7 228.6,200.6 227.7,202.2 225.4,206.0 222.9,210.2 220.3,214.4 217.6,218.9 213.9,225.0 210.2,231.1 206.2,237.6 202.3,244.1 198.4,250.6 194.5,257.0 190.8,263.1 187.1,269.2"/><polyline points="236.4,197.2 235.7,198.5 234.9,199.9 234.0,201.5 233.1,203.0 232.0,205.0 231.1,206.5 228.8,210.4 226.4,214.6 223.9,218.9 221.2,223.6 217.7,229.8 214.1,236.0 210.3,242.5 206.5,249.1 202.7,255.7 199.0,262.3 195.4,268.5 191.8,274.7"/><polyline points="239.6,201.4 238.8,202.8 238.1,204.2 237.2,205.7 236.4,207.3 235.3,209.3 234.4,210.8 232.3,214.8 230.0,219.1 227.6,223.4 225.1,228.1 221.6,234.4 218.2,240.7 214.6,247.3 211.0,254.0 207.3,260.7 203.7,267.3 200.3,273.6 196.9,279.9"/><polyline points="243.2,205.2 242.5,206.6 241.8,208.0 241.0,209.6 240.1,211.2 239.1,213.2 238.3,214.8 236.2,218.8 233.9,223.2 231.7,227.6 229.2,232.3 225.9,238.7 222.6,245.1 219.1,251.9 215.6,258.7 212.1,265.5 208.6,272.2 205.3,278.6 202.0,285.0"/><polyline points="246.9,208.9 246.3,210.3 245.6,211.8 244.8,213.4 244.0,215.0 243.0,217.0 242.2,218.7 240.2,222.7 238.0,227.2 235.9,231.6 233.5,236.5 230.3,242.9 227.2,249.4 223.8,256.3 220.4,263.2 217.1,270.1 213.7,277.0 210.5,283.4 207.4,289.9"/><polyline points="250.9,212.3 250.3,213.7 249.6,215.2 248.8,216.9 248.1,218.5 247.1,220.6 246.4,222.2 244.5,226.3 242.4,230.9 240.3,235.4 238.0,240.3 234.9,246.9 231.9,253.5 228.7,260.5 225.4,267.5 222.2,274.5 219.0,281.5 215.9,288.0 212.9,294.6"/><polyline points="255.2,215.4 254.6,216.8 254.0,218.3 253.2,220.0 252.5,221.6 251.6,223.7 250.9,225.4 249.0,229.5 247.0,234.1 245.0,238.7 242.9,243.7 239.9,250.4 237.0,257.1 233.9,264.1 230.8,271.2 227.7,278.3 224.7,285.4 221.7,292.1 218.8,298.7"/><polyline points="259.9,218.6 259.3,220.0 258.7,221.5 258.0,223.1 257.3,224.8 256.4,226.9 255.7,228.6 253.9,232.7 252.0,237.3 250.1,241.9 248.0,246.9 242.4,260.2 236.5,274.4 230.5,288.6 225.0,301.9"/><polyline points="269.4,224.6 268.8,226.0 268.3,227.5 267.6,229.2 266.9,230.8 266.1,232.9 265.5,234.6 263.8,238.7 262.0,243.3 260.2,247.9 258.2,252.8 253.0,266.1 247.4,280.2 241.8,294.3 236.6,307.6"/><polyline points="279.3,230.0 278.8,231.4 278.2,232.9 277.6,234.6 277.0,236.2 276.2,238.3 275.6,240.0 274.0,244.1 272.3,248.7 270.6,253.3 268.8,258.3 263.8,271.6 258.5,285.8 253.2,299.9 248.2,313.3"/><polyline points="289.3,235.3 288.8,236.7 288.3,238.2 287.7,239.9 287.1,241.6 286.3,243.7 285.8,245.3 284.3,249.5 282.7,254.1 281.1,258.7 279.3,263.7 274.6,277.1 269.6,291.3 264.6,305.6 259.9,318.9"/><polyline points="306.4,242.9 305.9,244.3 305.5,245.8 305.0,247.4 304.5,249.0 303.8,251.0 303.3,252.7 302.0,256.7 300.6,261.2 299.2,265.7 297.7,270.6 293.6,283.6 289.3,297.4 284.9,311.2 280.8,324.2"/><polyline points="324.4,248.2 324.0,249.6 323.6,251.1 323.2,252.7 322.7,254.3 322.2,256.3 321.7,258.0 320.6,262.0 319.3,266.5 318.1,270.9 316.7,275.8 313.1,288.7 309.3,302.5 305.4,316.3 301.8,329.2"/><polyline points="342.6,253.1 342.2,254.4 341.9,255.8 341.5,257.4 341.1,259.0 340.6,261.0 340.2,262.5 339.3,266.4 338.2,270.8 337.2,275.1 336.0,279.8 332.9,292.4 329.7,305.7 326.4,319.1 323.3,331.6"/><polyline points="361.0,256.7 360.7,258.0 360.4,259.4 360.1,260.9 359.8,262.5 359.4,264.4 359.1,266.0 358.3,269.8 357.4,274.1 356.5,278.3 355.5,282.9 352.9,295.3 350.1,308.4 347.4,321.5 344.8,333.8"/><polyline points="379.5,260.3 379.2,261.6 379.0,262.9 378.7,264.4 378.5,265.9 378.2,267.8 377.9,269.3 377.2,273.0 376.5,277.2 375.8,281.3 375.0,285.8 372.9,297.8 370.7,310.5 368.4,323.3 366.3,335.3"/><polyline points="398.2,261.5 398.1,262.8 397.9,264.1 397.7,265.6 397.5,267.1 397.2,269.0 397.0,270.5 396.5,274.2 395.9,278.3 395.3,282.4 394.7,286.9 393.1,298.8 391.3,311.5 389.5,324.2 387.9,336.1"/><polyline points="417.0,262.7 416.9,263.9 416.7,265.2 416.6,266.7 416.4,268.1 416.2,269.9 416.1,271.3 415.7,274.9 415.3,278.9 414.9,282.8 414.4,287.2 413.2,298.7 411.9,310.9 410.6,323.1 409.4,334.6"/><polyline points="435.8,263.2 435.7,264.3 435.6,265.6 435.5,266.9 435.4,268.3 435.3,270.0 435.2,271.4 434.9,274.8 434.7,278.6 434.4,282.3 434.1,286.4 433.3,297.4 432.4,309.0 431.6,320.7 430.8,331.6"/><polyline points="454.6,263.5 454.5,264.6 454.5,265.7 454.4,267.0 454.4,268.3 454.3,269.9 454.3,271.1 454.1,274.3 454.0,277.8 453.8,281.3 453.7,285.1 453.2,295.3 452.8,306.1 452.3,316.9 451.9,327.1"/><polyline points="473.3,262.3 473.3,263.3 473.3,264.3 473.3,265.5 473.3,266.7 473.3,268.2 473.3,269.4 473.2,272.4 473.2,275.6 473.2,278.9 473.1,282.4 473.1,292.0 473.0,302.1 472.9,312.2 472.8,321.7"/><polyline points="492.0,260.2 492.1,261.2 492.1,262.2 492.1,263.3 492.1,264.4 492.2,265.8 492.2,266.9 492.3,269.7 492.4,272.7 492.5,275.8 492.5,279.1 492.8,288.0 493.0,297.5 493.3,306.9 493.5,315.8"/><polyline points="510.7,258.3 510.8,259.2 510.9,260.1 510.9,261.2 511.0,262.2 511.1,263.6 511.2,264.6 511.4,267.2 511.6,270.1 511.8,273.0 512.0,276.2 512.7,284.6 513.3,293.6 514.0,302.6 514.6,311.0"/><polyline points="529.5,256.7 529.6,257.5 529.7,258.4 529.8,259.3 529.9,260.3 530.0,261.5 530.2,262.5 530.5,264.9 530.8,267.6 531.1,270.2 531.5,273.1 532.4,280.9 533.4,289.1 534.4,297.3 535.3,305.0"/><polyline points="548.2,255.1 548.3,255.8 548.5,256.6 548.6,257.5 548.8,258.4 549.0,259.5 549.2,260.4 549.6,262.6 550.0,265.1 550.5,267.6 550.9,270.2 552.2,277.4 553.6,285.0 555.0,292.6 556.3,299.7"/><polyline points="566.9,253.5 567.1,254.2 567.3,255.0 567.5,255.8 567.7,256.6 568.0,257.6 568.2,258.4 568.7,260.5 569.2,262.7 569.8,264.9 570.4,267.4 572.0,273.9 573.8,280.8 575.5,287.7 577.1,294.2"/><polyline points="578.2,252.6 578.4,253.3 578.6,254.0 578.8,254.7 579.0,255.5 579.3,256.5 579.6,257.2 580.1,259.1 580.8,261.2 581.4,263.3 582.1,265.6 583.9,271.7 585.9,278.2 587.8,284.7 589.6,290.8"/><polyline points="589.5,252.6 589.7,253.2 589.9,253.8 590.2,254.5 590.4,255.2 590.7,256.1 591.0,256.8 591.6,258.5 592.3,260.4 593.0,262.3 593.8,264.4 595.8,270.0 597.9,275.9 600.1,281.8 602.1,287.3"/><polyline points="600.7,252.8 601.0,253.3 601.2,253.8 601.5,254.4 601.8,255.1 602.1,255.8 602.4,256.4 603.1,258.0 603.8,259.7 604.6,261.4 605.4,263.2 607.6,268.1 610.0,273.3 612.3,278.6 614.5,283.5"/><polyline points="612.0,252.9 612.3,253.4 612.5,253.8 612.8,254.4 613.1,254.9 613.5,255.6 613.8,256.1 614.5,257.4 615.4,258.9 616.2,260.4 617.1,262.0 619.4,266.3 622.0,270.8 624.5,275.3 626.9,279.6"/><polyline points="623.3,253.5 623.5,253.9 623.8,254.3 624.1,254.7 624.5,255.2 624.9,255.7 625.2,256.2 626.0,257.3 626.9,258.5 627.7,259.7 628.7,261.1 631.2,264.6 634.0,268.4 636.7,272.2 639.2,275.7"/><polyline points="634.4,255.2 634.6,255.5 634.9,255.8 635.2,256.2 635.4,256.5 635.8,257.0 636.0,257.4 636.7,258.3 637.5,259.3 638.2,260.3 639.0,261.4 641.2,264.4 643.5,267.5 645.9,270.6 648.0,273.6"/><polyline points="645.6,256.8 645.8,257.1 646.0,257.3 646.2,257.6 646.4,257.9 646.7,258.3 646.9,258.6 647.5,259.3 648.1,260.1 648.7,260.9 649.4,261.8 651.2,264.1 653.1,266.6 655.0,269.1 656.9,271.4"/><polyline points="656.8,258.1 656.9,258.3 657.1,258.5 657.3,258.7 657.4,258.9 657.7,259.2 657.8,259.4 658.3,260.0 658.8,260.6 659.3,261.2 659.8,261.9 661.2,263.7 662.7,265.6 664.2,267.5 665.7,269.3"/><polyline points="668.0,259.0 668.1,259.1 668.2,259.3 668.4,259.5 668.5,259.6 668.7,259.8 668.8,260.0 669.1,260.4 669.5,260.8 669.8,261.3 670.2,261.8 671.3,263.1 672.4,264.5 673.5,265.9 674.5,267.2"/><polyline points="679.3,259.9 679.3,260.0 679.4,260.1 679.5,260.2 679.6,260.3 679.7,260.4 679.7,260.6 680.0,260.8 680.2,261.1 680.4,261.4 680.6,261.7 681.3,262.5 682.0,263.4 682.7,264.2 683.3,265.0"/><polyline points="690.5,260.9 690.5,260.9 690.6,260.9 690.6,261.0 690.6,261.0 690.7,261.1 690.7,261.1 690.8,261.2 690.9,261.3 691.0,261.4 691.1,261.6 691.3,261.9 691.6,262.2 691.9,262.6 692.1,262.9"/></g>
<polyline points="165.5,172.0 173.0,168.5 184.0,166.0 197.0,165.5 207.5,168.5 215.0,173.0 223.0,182.0 231.0,190.0 240.0,202.0 249.0,211.0 259.0,218.0 270.0,225.0 300.0,241.0 320.0,247.0 340.0,252.6 380.0,260.4 420.0,262.9 455.0,263.5 480.0,261.8 500.0,259.2 550.0,254.9 580.0,252.5 620.0,253.0 650.0,257.5 680.0,260.0 698.0,261.5 640.0,275.5 600.0,288.0 560.0,298.8 540.0,303.6 520.0,309.8 490.0,316.6 460.0,325.4 430.0,331.8 400.0,335.9 380.0,336.2 340.0,333.5 300.0,329.0 260.0,319.0 220.0,299.5 215.0,296.5 204.0,287.0 197.0,280.0 188.2,271.0 181.3,260.7 174.4,246.8 167.5,234.8 161.4,221.0 154.5,210.6 153.6,201.0 154.0,191.0 158.0,183.0 161.0,176.5 165.5,172.0" fill="none" stroke="#fff" stroke-width="1"/>
<polyline points="108.0,75.0 162.0,188.0" fill="none" stroke="#ff0000"/>
<polyline points="161.6,188.0 227.6,184.8 273.0,182.0" fill="none" stroke="#ff0000"/>
<polyline points="161.5,188.0 161.5,288.0" fill="none" stroke="#ff0000"/>
<polyline points="162.5,188.0 162.5,288.0" fill="none" stroke="#ff0000"/>
<polyline points="161.6,188.0 162.3,189.2 163.2,190.7 164.3,192.6 165.6,194.7 167.0,196.8 168.6,198.8 170.2,200.7 172.0,202.6 173.9,204.5 176.0,206.5 178.3,208.7 181.0,211.0 184.1,213.7 187.7,216.6 191.6,219.7 195.5,222.8 199.3,225.7 202.8,228.3 205.9,230.5 208.7,232.4 211.4,234.1 214.1,235.7 216.9,237.3 220.0,239.0 223.4,240.8 227.0,242.7 230.7,244.5 234.5,246.3 238.1,248.0 241.6,249.6 244.6,250.9 247.2,252.1 249.6,253.1 252.4,254.2 255.7,255.5 260.0,257.0 265.4,259.0 271.7,261.3 278.6,263.7 285.8,266.2 293.1,268.5 300.0,270.5 306.7,272.1 313.4,273.5 320.2,274.8 326.9,275.9 333.7,277.0 340.4,278.0 347.1,279.0 353.9,279.9 360.6,280.8 367.3,281.6 374.0,282.3 380.7,283.0 387.1,283.6 393.3,284.2 399.5,284.7 405.8,285.1 412.6,285.4 420.0,285.5 428.8,285.3 439.1,284.9 449.7,284.4 459.8,283.8 468.4,283.3 474.5,283.0 758.0,250.0" fill="none" stroke="#ff0000"/>
<polyline points="474.5,283.0 452.4,385.8" fill="none" stroke="#ff0000"/>
<polyline points="419.7,224.6 474.5,283.0" fill="none" stroke="#ff0000"/>
<rect x="232" y="225" width="13" height="23" fill="#ff0000"/>
<polygon points="232,248 245,248 238,264" fill="#d8b000"/>
<line x1="232" y1="234" x2="245" y2="228" stroke="#fff"/>
<g fill="none" stroke="#ff0000"><polyline points="461.5,229 464.5,234 467.5,229"/><line x1="464.5" y1="234" x2="464.5" y2="238.5"/><polyline points="430,257.5 437.9,257.5 433,263"/></g></svg>
<div class="wt" style="left:1px;top:41px;letter-spacing:0.2px">Temperature</div>
<div class="wt" style="left:637px;top:42px">Probe value</div>
<div class="lg" style="left:642px;top:61px;color:#fff">1.811E+01</div>
<div class="wt" style="left:178px;top:533px;letter-spacing:0.1px">GeoGrid Example</div>

<div class="lg" style="top:61px;color:#ff0000">2.500E+01</div>
<div class="lg" style="top:81px;color:#ff4000">2.433E+01</div>
<div class="lg" style="top:101px;color:#ff5000">2.365E+01</div>
<div class="lg" style="top:122px;color:#ff7000">2.298E+01</div>
<div class="lg" style="top:142px;color:#f0a000">2.231E+01</div>
<div class="lg" style="top:162px;color:#f0a000">2.164E+01</div>
<div class="lg" style="top:183px;color:#a0ff00">2.096E+01</div>
<div class="lg" style="top:203px;color:#f0d000">2.029E+01</div>
<div class="lg" style="top:223px;color:#c0e000">1.962E+01</div>
<div class="lg" style="top:244px;color:#00ff00">1.895E+01</div>
<div class="lg" style="top:264px;color:#00e000">1.827E+01</div>
<div class="lg" style="top:284px;color:#00e0e0">1.760E+01</div>
<div class="lg" style="top:304px;color:#00b0e0">1.693E+01</div>
<div class="lg" style="top:325px;color:#0070ff">1.625E+01</div>
<div class="lg" style="top:345px;color:#0040ff">1.558E+01</div>
<div class="lg" style="top:365px;color:#0000ff">1.491E+01</div>

<div class="abs" style="left:0;top:558px;width:773px;height:1px;background:#d4d4d4"></div>
<div class="abs" style="left:0;top:560px;width:772px;height:1px;background:#808080"></div>
<div class="abs" style="left:0;top:560px;width:1px;height:17px;background:#808080"></div>
<div class="abs" style="left:0;top:577px;width:772px;height:1px;background:#fff"></div>
<div class="abs" style="left:772px;top:560px;width:1px;height:5px;background:#fff"></div>
<div class="abs" style="left:772px;top:0;width:1px;height:42px;background:#b09a90"></div>
<div class="abs" style="left:772px;top:565px;width:1px;height:13px;background:#b09088"></div><div class="abs" style="left:772px;top:558px;width:1px;height:2px;background:#b09088"></div>
<svg width="773" height="578" style="position:absolute;left:0;top:0" shape-rendering="crispEdges"><rect x="760" y="576" width="1" height="1" fill="#fff"/><rect x="761" y="575" width="1" height="1" fill="#fff"/><rect x="761" y="576" width="1" height="1" fill="#808080"/><rect x="762" y="574" width="1" height="1" fill="#fff"/><rect x="762" y="575" width="1" height="1" fill="#808080"/><rect x="762" y="576" width="1" height="1" fill="#808080"/><rect x="763" y="573" width="1" height="1" fill="#fff"/><rect x="763" y="574" width="1" height="1" fill="#808080"/><rect x="763" y="575" width="1" height="1" fill="#808080"/><rect x="764" y="572" width="1" height="1" fill="#fff"/><rect x="764" y="573" width="1" height="1" fill="#808080"/><rect x="764" y="574" width="1" height="1" fill="#808080"/><rect x="764" y="576" width="1" height="1" fill="#fff"/><rect x="765" y="571" width="1" height="1" fill="#fff"/><rect x="765" y="572" width="1" height="1" fill="#808080"/><rect x="765" y="573" width="1" height="1" fill="#808080"/><rect x="765" y="575" width="1" height="1" fill="#fff"/><rect x="765" y="576" width="1" height="1" fill="#808080"/><rect x="766" y="570" width="1" height="1" fill="#fff"/><rect x="766" y="571" width="1" height="1" fill="#808080"/><rect x="766" y="572" width="1" height="1" fill="#808080"/><rect x="766" y="574" width="1" height="1" fill="#fff"/><rect x="766" y="575" width="1" height="1" fill="#808080"/><rect x="766" y="576" width="1" height="1" fill="#808080"/><rect x="767" y="569" width="1" height="1" fill="#fff"/><rect x="767" y="570" width="1" height="1" fill="#808080"/><rect x="767" y="571" width="1" height="1" fill="#808080"/><rect x="767" y="573" width="1" height="1" fill="#fff"/><rect x="767" y="574" width="1" height="1" fill="#808080"/><rect x="767" y="575" width="1" height="1" fill="#808080"/><rect x="768" y="568" width="1" height="1" fill="#fff"/><rect x="768" y="569" width="1" height="1" fill="#808080"/><rect x="768" y="570" width="1" height="1" fill="#808080"/><rect x="768" y="572" width="1" height="1" fill="#fff"/><rect x="768" y="573" width="1" height="1" fill="#808080"/><rect x="768" y="574" width="1" height="1" fill="#808080"/><rect x="768" y="576" width="1" height="1" fill="#fff"/><rect x="769" y="567" width="1" height="1" fill="#fff"/><rect x="769" y="568" width="1" height="1" fill="#808080"/><rect x="769" y="569" width="1" height="1" fill="#808080"/><rect x="769" y="571" width="1" height="1" fill="#fff"/><rect x="769" y="572" width="1" height="1" fill="#808080"/><rect x="769" y="573" width="1" height="1" fill="#808080"/><rect x="769" y="575" width="1" height="1" fill="#fff"/><rect x="769" y="576" width="1" height="1" fill="#808080"/><rect x="770" y="566" width="1" height="1" fill="#fff"/><rect x="770" y="567" width="1" height="1" fill="#808080"/><rect x="770" y="568" width="1" height="1" fill="#808080"/><rect x="770" y="570" width="1" height="1" fill="#fff"/><rect x="770" y="571" width="1" height="1" fill="#808080"/><rect x="770" y="572" width="1" height="1" fill="#808080"/><rect x="770" y="574" width="1" height="1" fill="#fff"/><rect x="770" y="575" width="1" height="1" fill="#808080"/><rect x="770" y="576" width="1" height="1" fill="#808080"/><rect x="771" y="565" width="1" height="1" fill="#fff"/><rect x="771" y="566" width="1" height="1" fill="#808080"/><rect x="771" y="567" width="1" height="1" fill="#808080"/><rect x="771" y="569" width="1" height="1" fill="#fff"/><rect x="771" y="570" width="1" height="1" fill="#808080"/><rect x="771" y="571" width="1" height="1" fill="#808080"/><rect x="771" y="573" width="1" height="1" fill="#fff"/><rect x="771" y="574" width="1" height="1" fill="#808080"/><rect x="771" y="575" width="1" height="1" fill="#808080"/></svg>
<div class="abs" style="left:2px;top:562px;font-size:11px;line-height:12px;color:#000">Ready</div>
</body></html>
